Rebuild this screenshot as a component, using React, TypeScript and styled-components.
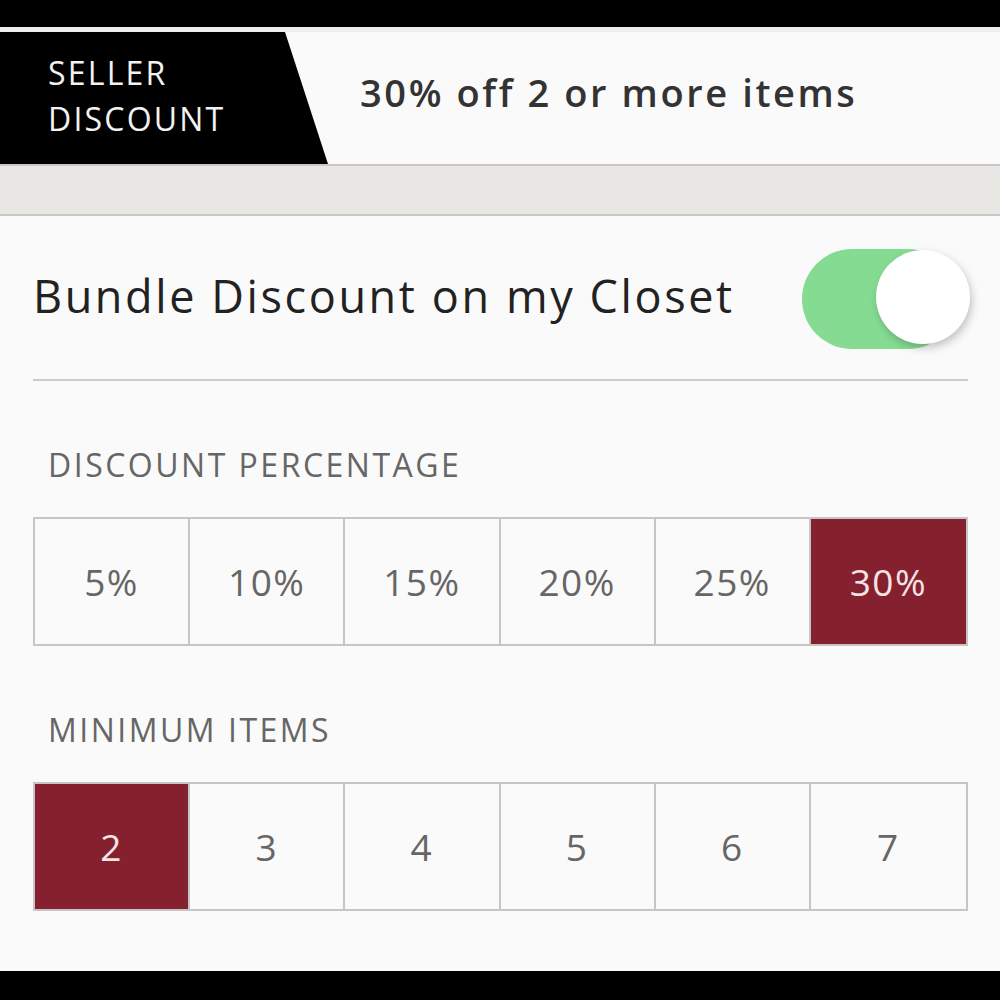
import styled, { createGlobalStyle } from "styled-components"

const GlobalStyle = createGlobalStyle`
    html, body {
        margin: 0;
        padding: 0;
        background: #000;
    }
    * {
        box-sizing: border-box;
    }
`

const Screen = styled.div`
    width: 1000px;
    height: 1000px;
    display: flex;
    flex-direction: column;
    background: #000;
    font-family: "Open Sans", Lato, sans-serif;
    overflow: hidden;
`

const StatusBar = styled.div`
    height: 27px;
    background: #000;
    flex-shrink: 0;
`

const Page = styled.div`
    flex: 1;
    display: flex;
    flex-direction: column;
    background: #fbfafa;
    border-top: 5px solid #efeeec;
`

const Header = styled.div`
    height: 132px;
    display: flex;
    align-items: center;
    flex-shrink: 0;
`

const Tag = styled.div`
    height: 100%;
    width: 328px;
    background: #000;
    clip-path: polygon(0 0, 285px 0, 328px 100%, 0 100%);
    display: flex;
    flex-direction: column;
    justify-content: center;
    padding-left: 48px;
    padding-bottom: 4px;
    color: #f2f2f2;
    font-size: 32px;
    line-height: 46px;
    letter-spacing: 2.2px;
`

const Headline = styled.div`
    margin-left: 32px;
    font-size: 38px;
    font-weight: 600;
    color: #333;
    padding-bottom: 12px;
    letter-spacing: 2.6px;
`

const Band = styled.div`
    height: 52px;
    flex-shrink: 0;
    background: #e9e7e4;
    border-top: 2px solid #c9c8c6;
    border-bottom: 2px solid #c9c8c6;
`

const Content = styled.div`
    flex: 1;
    padding: 0 32px 0 33px;
    display: flex;
    flex-direction: column;
`

const ToggleRow = styled.div`
    height: 165px;
    display: flex;
    align-items: center;
    justify-content: space-between;
    border-bottom: 2px solid #cbcbcb;
    padding-bottom: 4px;
`

const ToggleLabel = styled.div`
    font-size: 45px;
    color: #222;
    letter-spacing: 2.6px;
`

const Switch = styled.div<{ $on: boolean }>`
    position: relative;
    width: 156px;
    height: 100px;
    border-radius: 50px;
    background: ${(p) => (p.$on ? "#86db92" : "#ddd")};
    margin-right: 10px;
    margin-top: 6px;
`

const Knob = styled.div<{ $on: boolean }>`
    position: absolute;
    top: 1px;
    ${(p) => (p.$on ? "right: -12px;" : "left: 2px;")}
    width: 94px;
    height: 94px;
    border-radius: 50%;
    background: #fff;
    box-shadow: 2px 4px 8px rgba(0, 0, 0, 0.22);
`

const SectionLabel = styled.div`
    margin-top: 66px;
    padding-left: 15px;
    font-size: 32px;
    color: #666;
    line-height: 36px;
    letter-spacing: 2.5px;
`

const Segments = styled.div`
    margin-top: 34px;
    width: 935px;
    height: 129px;
    display: grid;
    grid-template-columns: repeat(6, 1fr);
    border: 2px solid #c6c6c6;
`

const Segment = styled.div<{ $selected: boolean }>`
    display: flex;
    align-items: center;
    justify-content: center;
    font-size: 37px;
    letter-spacing: 1.5px;
    color: ${(p) => (p.$selected ? "#f6e3e5" : "#666")};
    background: ${(p) => (p.$selected ? "#85202f" : "transparent")};
    border-right: 2px solid #c6c6c6;
    &:last-child {
        border-right: none;
    }
`

const Spacer = styled.div`
    height: 60px;
`

const Footer = styled.div`
    height: 29px;
    background: #000;
    flex-shrink: 0;
`

const percentages = ["5%", "10%", "15%", "20%", "25%", "30%"]
const items = ["2", "3", "4", "5", "6", "7"]

export default function App() {
    return (
        <>
            <GlobalStyle />
            <Screen>
                <StatusBar />
                <Page>
                    <Header>
                        <Tag>
                            <div>SELLER</div>
                            <div>DISCOUNT</div>
                        </Tag>
                        <Headline>30% off 2 or more items</Headline>
                    </Header>
                    <Band />
                    <Content>
                        <ToggleRow>
                            <ToggleLabel>Bundle Discount on my Closet</ToggleLabel>
                            <Switch $on>
                                <Knob $on />
                            </Switch>
                        </ToggleRow>
                        <SectionLabel>DISCOUNT PERCENTAGE</SectionLabel>
                        <Segments>
                            {percentages.map((p) => (
                                <Segment key={p} $selected={p === "30%"}>
                                    {p}
                                </Segment>
                            ))}
                        </Segments>
                        <SectionLabel>MINIMUM ITEMS</SectionLabel>
                        <Segments>
                            {items.map((n) => (
                                <Segment key={n} $selected={n === "2"}>
                                    {n}
                                </Segment>
                            ))}
                        </Segments>
                        <Spacer />
                    </Content>
                </Page>
                <Footer />
            </Screen>
        </>
    )
}
